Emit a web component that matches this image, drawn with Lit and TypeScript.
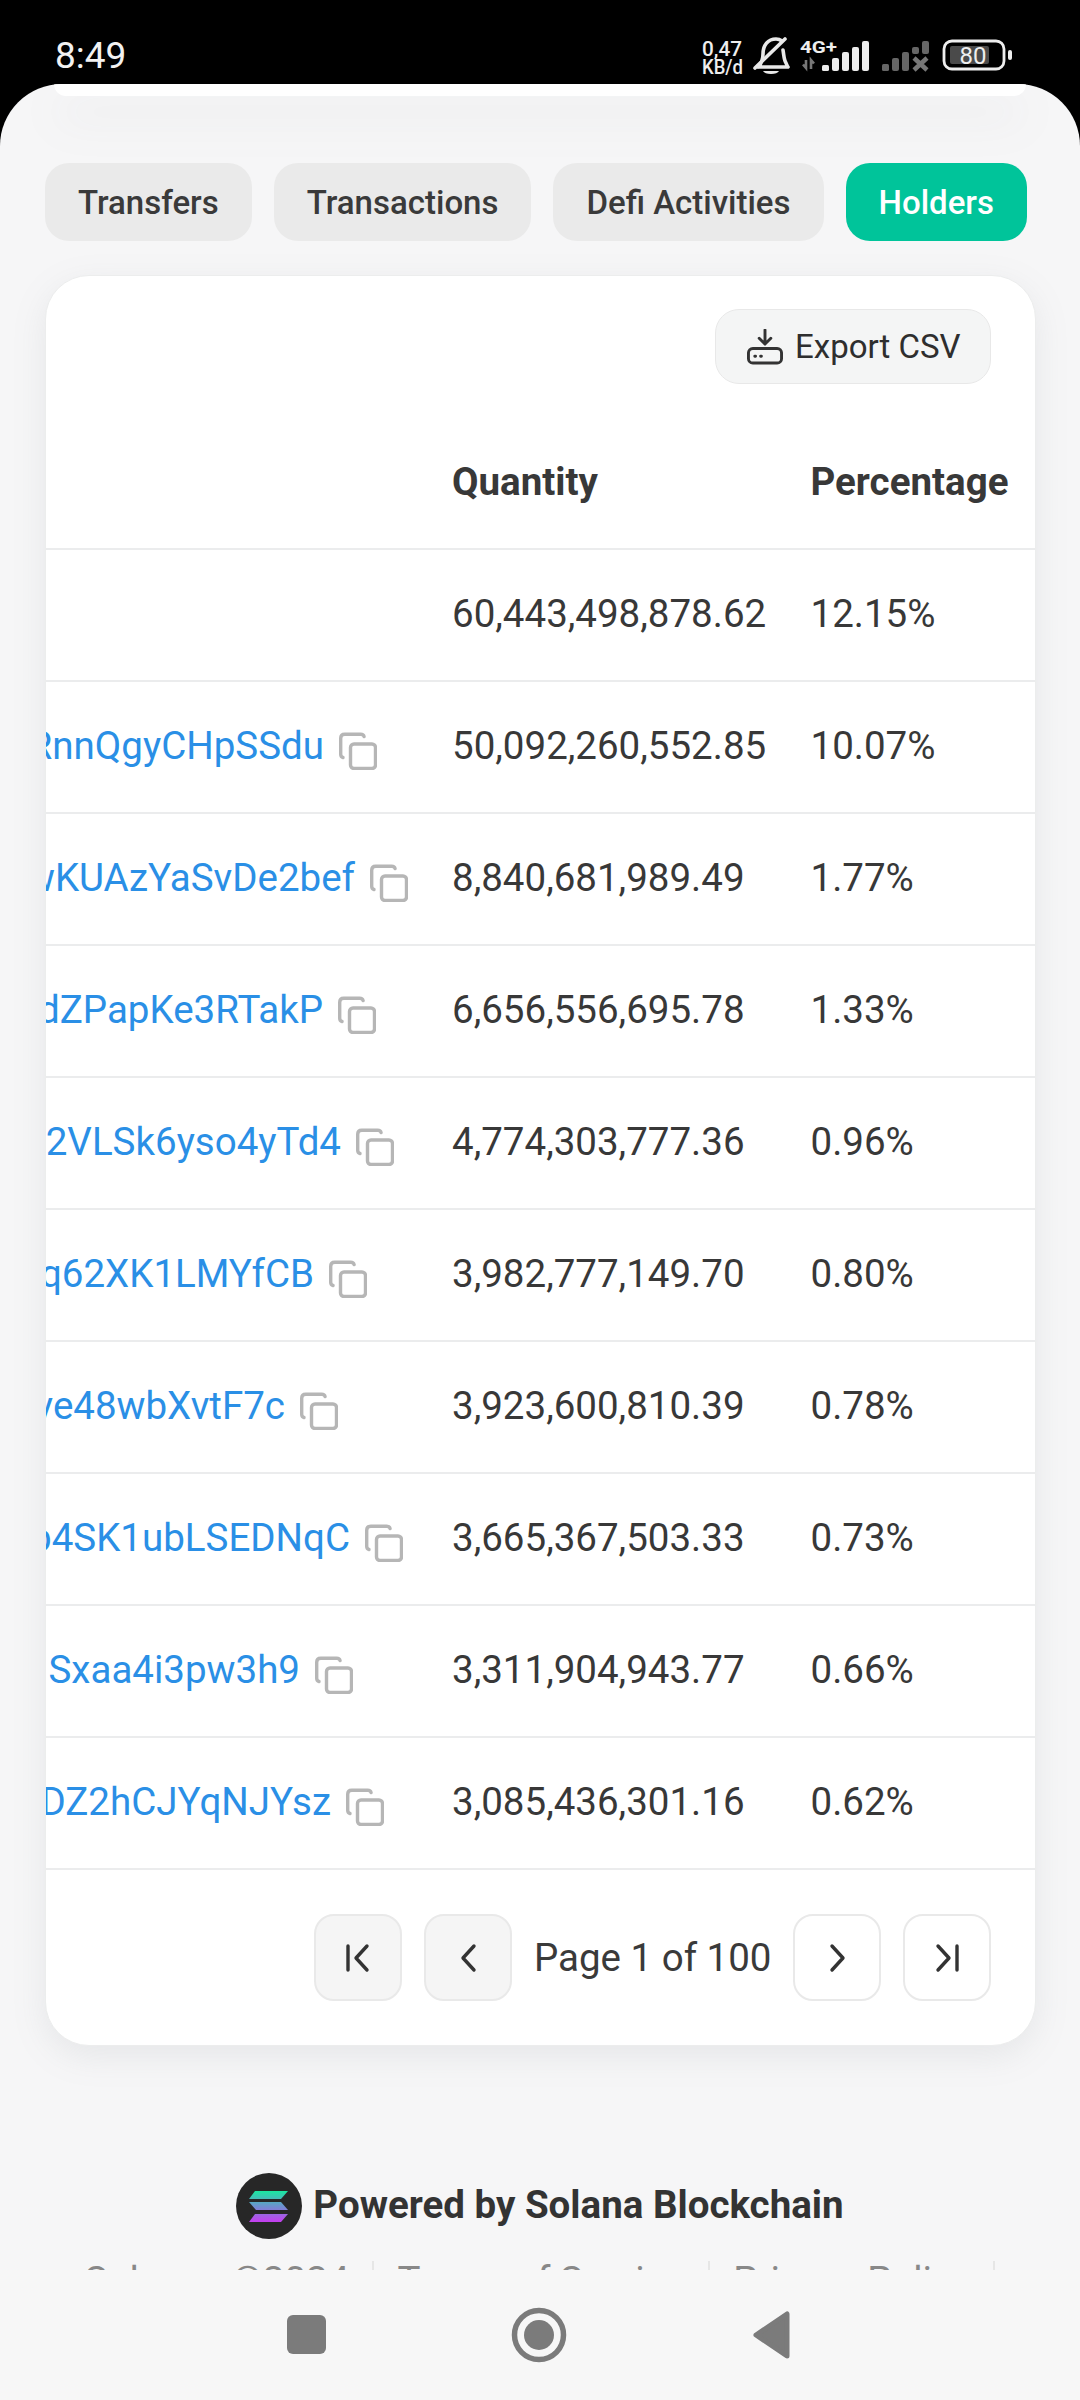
import { LitElement, html, css, svg } from "lit";
import { customElement } from "lit/decorators.js";

interface Row { addr: string; end: number; qty: string; pct: string }

const rows: Row[] = [
  { addr: "", end: 0, qty: "60,443,498,878.62", pct: "12.15%" },
  { addr: "7RnnQgyCHpSSdu", end: 376, qty: "50,092,260,552.85", pct: "10.07%" },
  { addr: "8wKUAzYaSvDe2bef", end: 407, qty: "8,840,681,989.49", pct: "1.77%" },
  { addr: "AdZPapKe3RTakP", end: 375, qty: "6,656,556,695.78", pct: "1.33%" },
  { addr: "2VLSk6yso4yTd4", end: 393, qty: "4,774,303,777.36", pct: "0.96%" },
  { addr: "7q62XK1LMYfCB", end: 366, qty: "3,982,777,149.70", pct: "0.80%" },
  { addr: "Xve48wbXvtF7c", end: 337, qty: "3,923,600,810.39", pct: "0.78%" },
  { addr: "Gb4SK1ubLSEDNqC", end: 402, qty: "3,665,367,503.33", pct: "0.73%" },
  { addr: "Sxaa4i3pw3h9", end: 352, qty: "3,311,904,943.77", pct: "0.66%" },
  { addr: "4DZ2hCJYqNJYsz", end: 383, qty: "3,085,436,301.16", pct: "0.62%" },
];

const copyIcon = svg`<svg class="copy" viewBox="0 0 38 38" fill="none" stroke="#b6b6b6" stroke-width="3.4" stroke-linecap="round" stroke-linejoin="round">
  <rect x="11.5" y="12" width="25" height="24.5" rx="3.5"/>
  <path d="M4 25.5c-1.6-.4-2.3-1.6-2.3-3.3V6.2c0-2.4 1.5-4 4-4h16c1.7 0 3 .8 3.4 2.4"/></svg>`;

@customElement("app-root")
export class AppRoot extends LitElement {
  static styles = css`
    :host { display: block; width: 1080px; height: 2400px; background: #000; overflow: hidden;
      font-family: Roboto, "Liberation Sans", sans-serif; color: #333; }
    .page { height: 2400px; display: flex; flex-direction: column; }
    .status { height: 84px; flex: none; display: flex; align-items: flex-start; justify-content: space-between;
      padding: 0 0 0 55px; color: #f2f2f2; box-sizing: border-box; }
    .time { font-size: 37px; line-height: 37px; margin-top: 37px; }
    .status-icons { display: block; width: 400px; height: 84px; flex: none; }
    .screen { flex: 1; min-height: 0; background: #f6f6f7; border-radius: 62px 62px 0 0; overflow: hidden;
      display: flex; flex-direction: column; }
    .main { flex: 1; min-height: 0; overflow: hidden; }
    .stub { height: 12px; margin: 0 54px; background: #fff; border-radius: 0 0 26px 26px;
      box-shadow: 0 22px 44px rgba(120,130,140,.13); }
    .tabs { display: flex; gap: 22px; padding: 67px 0 0 45px; }
    .tab { height: 78px; padding: 0 33px; border-radius: 24px; background: #eaeaea; display: flex; align-items: center;
      font-size: 33px; font-weight: 500; color: #3a3a3a; white-space: nowrap; }
    .tab.on { background: #00c49a; color: #fff; }
    .card { width: 991px; margin: 34px 0 0 45px; box-sizing: border-box; height: 1771px; background: #fff;
      border-radius: 44px; border: 1px solid #eceded; overflow: hidden; box-shadow: 0 10px 34px rgba(120,130,140,.13); }
    .toolbar { display: flex; justify-content: flex-end; padding: 33px 44px 0 0; height: 142px; box-sizing: border-box; }
    .export { height: 75px; width: 276px; box-sizing: border-box; display: flex; align-items: center; gap: 12px; padding-left: 31px;
      background: #f4f5f5; border: 1.5px solid #e8e8e8; border-radius: 24px; font-size: 33px; font-weight: 400; color: #2e2e2e; }
    .export svg { width: 36px; height: 36px; flex: none; }
    .row { display: grid; grid-template-columns: 406px 358.5px 1fr; height: 132px; box-sizing: border-box; padding-bottom: 3px;
      border-bottom: 2px solid #ebeced; align-items: center; font-size: 38.5px; color: #383838; white-space: nowrap; }
    .row.head { font-weight: 700; }
    .cell-addr { display: flex; justify-content: flex-end; align-items: center; gap: 15px; min-width: 0; overflow: hidden; height: 100%; }
    .addr { color: #2a8fe6; flex: none; }
    .copy { width: 38px; height: 38px; flex: none; margin-top: 10px; }
    .pager { display: flex; justify-content: flex-end; align-items: center; gap: 22px; padding: 44px 44px 0 0; }
    .pbtn { width: 88px; height: 87px; box-sizing: border-box; border: 2px solid #e9e9e9; border-radius: 20px; background: #fff;
      display: flex; align-items: center; justify-content: center; }
    .pbtn.off { background: #f5f5f5; }
    .pbtn svg { width: 40px; height: 40px; }
    .plabel { font-size: 38.5px; color: #3a3a3a; margin: 0 -0.5px; }
    .footer { display: flex; flex-direction: column; align-items: center; margin-top: 127px; }
    .powered { display: flex; align-items: center; gap: 11px; font-size: 38.5px; font-weight: 700; color: #333; height: 66px; }
    .powered span { padding-bottom: 4px; }
    .logo { width: 66px; height: 66px; flex: none; }
    .links { margin-top: 19px; font-size: 38.5px; line-height: 45px; color: #888; white-space: nowrap; display: flex; gap: 23px; align-items: center; }
    .links .sep { width: 2px; height: 40px; background: #e6e6e6; }
    .links .brand { word-spacing: 21px; }
    .nav { height: 130px; flex: none; background: #f7f7f7; position: relative; }
    .nav svg { display: block; width: 1080px; height: 130px; }
  `;

  render() {
    return html`<div class="page">
      <div class="status">
        <div class="time">8:49</div>
        <svg class="status-icons" viewBox="680 0 400 84">
          <text x="702" y="56" font-family="Roboto" font-weight="500" font-size="21" fill="#eee" textLength="40" lengthAdjust="spacingAndGlyphs">0,47</text>
          <text x="702" y="74" font-family="Roboto" font-weight="500" font-size="20" fill="#eee" textLength="41" lengthAdjust="spacingAndGlyphs">KB/d</text>
          <g fill="none" stroke="#e8e8e8" stroke-width="3.6" stroke-linecap="round" stroke-linejoin="round">
            <path d="M758 67c3-3 5-7 5-13 0-9 5-15 13-15 2 0 4 .5 6 2M783 50c1 6 1 10 3 13 1 2 1 3 2 4h-30"/>
            <path d="M755 68 785 39"/>
          </g>
          <path d="M763 71h16c-1 2-4 3-8 3s-7-1-8-3z" fill="#e8e8e8"/>
          <text x="800" y="53" font-family="Roboto" font-weight="700" font-size="17" fill="#eee" textLength="37" lengthAdjust="spacingAndGlyphs">4G+</text>
          <path d="M806 60v8l-3-3.500M811 69v-9l3 3.500" fill="none" stroke="#777" stroke-width="2.600"/>
          <g fill="#ececec">
            <rect x="822" y="65" width="7" height="6" rx="1.500"/><rect x="832" y="58" width="7" height="13" rx="2"/>
            <rect x="842" y="52" width="7" height="19" rx="2"/><rect x="852" y="47" width="7" height="24" rx="2"/>
            <rect x="862" y="41" width="7" height="30" rx="2"/>
          </g>
          <g fill="#666">
            <rect x="882" y="64" width="7" height="7" rx="1.500"/><rect x="892" y="58" width="7" height="13" rx="2"/>
            <rect x="902" y="52" width="7" height="19" rx="2"/><rect x="912" y="47" width="7" height="7" rx="2"/>
            <rect x="922" y="41" width="7" height="13" rx="2"/>
          </g>
          <path d="M914 58l13 12M927 58l-13 12" stroke="#777" stroke-width="4.500"/>
          <rect x="944" y="41" width="60" height="28" rx="8" fill="none" stroke="#eee" stroke-width="2.800"/>
          <rect x="950" y="46" width="39" height="18" rx="2" fill="#4a4a4a"/>
          <text x="973" y="64" text-anchor="middle" font-family="Roboto" font-size="24" fill="#eee">80</text>
          <rect x="1008" y="50" width="4" height="10" rx="2" fill="#eee"/>
        </svg>
      </div>
      <div class="screen">
        <div class="main">
          <div class="stub"></div>
          <div class="tabs">
            <div class="tab">Transfers</div><div class="tab">Transactions</div>
            <div class="tab">Defi Activities</div><div class="tab on">Holders</div>
          </div>
          <div class="card">
            <div class="toolbar"><div class="export">
              <svg viewBox="0 0 37 37" fill="none" stroke="#333" stroke-width="3" stroke-linecap="round" stroke-linejoin="round">
                <path d="M18.5 1v14M12.5 9.5l6 6 6-6"/><rect x="1.5" y="20" width="34" height="15" rx="4.5"/>
                <path d="M8 28h.8M14 28h.8"/></svg>
              <span>Export CSV</span></div></div>
            <div class="row head"><span></span><span>Quantity</span><span>Percentage</span></div>
            ${rows.map((r) => html`<div class="row">
              <div class="cell-addr" style="padding-right:${r.end ? 406 + 45 - r.end : 0}px">
                ${r.addr ? html`<span class="addr">${r.addr}</span>${copyIcon}` : ""}
              </div>
              <span>${r.qty}</span><span>${r.pct}</span>
            </div>`)}
            <div class="pager">
              <div class="pbtn off"><svg viewBox="0 0 40 40" fill="none" stroke="#333" stroke-width="3.400" stroke-linecap="round" stroke-linejoin="round"><path d="M10 8v24M29 8 18 20l11 12"/></svg></div>
              <div class="pbtn off"><svg viewBox="0 0 40 40" fill="none" stroke="#333" stroke-width="3.400" stroke-linecap="round" stroke-linejoin="round"><path d="M26 8 15 20l11 12"/></svg></div>
              <div class="plabel">Page 1 of 100</div>
              <div class="pbtn"><svg viewBox="0 0 40 40" fill="none" stroke="#333" stroke-width="3.400" stroke-linecap="round" stroke-linejoin="round"><path d="M15 8l11 12-11 12"/></svg></div>
              <div class="pbtn"><svg viewBox="0 0 40 40" fill="none" stroke="#333" stroke-width="3.400" stroke-linecap="round" stroke-linejoin="round"><path d="M30 8v24M11 8l11 12-11 12"/></svg></div>
            </div>
          </div>
          <div class="footer">
            <div class="powered">
              <svg class="logo" viewBox="0 0 66 66">
                <defs><linearGradient id="sol" x1="0" y1="0" x2="0" y2="1">
                  <stop offset="0" stop-color="#19e8a0"/><stop offset=".5" stop-color="#6f8fd0"/><stop offset="1" stop-color="#c63df0"/></linearGradient></defs>
                <circle cx="33" cy="33" r="33" fill="#272727"/>
                <path d="M19 18h33l-7 8H13zM13 29h32l7 8H20zM19 41h33l-7 8H13z" fill="url(#sol)"/>
              </svg>
              <span>Powered by Solana Blockchain</span>
            </div>
            <div class="links"><span class="brand">Solana ©2024</span><i class="sep"></i><span>Terms of Service</span><i class="sep"></i><span>Privacy Policy</span><i class="sep"></i></div>
          </div>
        </div>
        <div class="nav"><svg viewBox="0 0 1080 130">
          <rect x="287" y="45" width="39" height="39" rx="6" fill="#7b7b7b"/>
          <circle cx="539" cy="65" r="24.500" fill="none" stroke="#7b7b7b" stroke-width="5.500"/>
          <circle cx="539" cy="65" r="15" fill="#7b7b7b"/>
          <path d="M756 65 787 44v42z" fill="#7b7b7b" stroke="#7b7b7b" stroke-width="5" stroke-linejoin="round"/>
        </svg></div>
      </div>
    </div>`;
  }
}
